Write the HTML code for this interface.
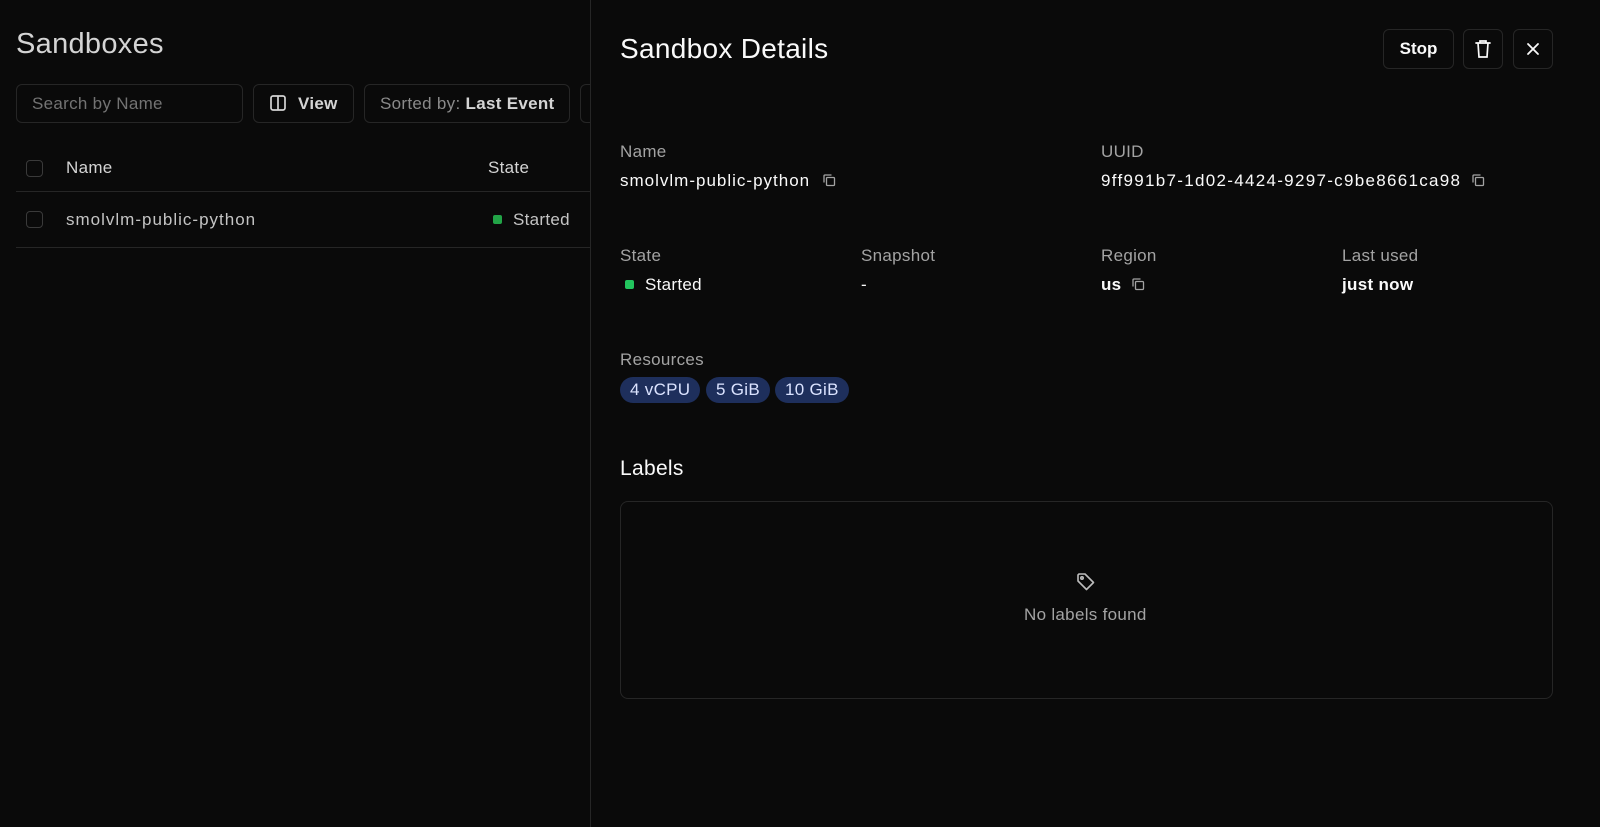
<!DOCTYPE html>
<html><head><style>
*{box-sizing:border-box;margin:0;padding:0}
body{width:1600px;height:827px;background:#0a0a0a;font-family:"Liberation Sans",sans-serif;color:#fafafa;overflow:hidden;position:relative}
.left{position:absolute;left:0;top:0;width:590px;height:827px;background:#0a0a0a}
.t{position:absolute;white-space:nowrap;letter-spacing:0.3px}
.btn{position:absolute;border:1px solid #262626;border-radius:6px;background:#0a0a0a;display:flex;align-items:center;justify-content:center}
.cb{position:absolute;width:17px;height:17px;border:1px solid #3a3a3a;border-radius:4px}
.panel{position:absolute;left:590px;top:0;width:1010px;height:827px;border-left:1px solid #262626;background:#0a0a0a}
.lbl{color:#a3a3a3;font-size:17px}
.val{color:#fafafa;font-size:17px}
.pill{position:absolute;top:377px;height:26px;background:#1e2f5c;border-radius:13px;color:#dbe3ff;font-size:17px;line-height:26px;padding:0 10px;letter-spacing:0.3px}
</style></head><body>
<div class="left">
<div class="t" style="left:16px;top:28px;font-size:29px;color:#d4d4d4">Sandboxes</div>
<div class="btn" style="left:16px;top:84px;width:227px;height:39px"></div>
<div class="t" style="left:32px;top:94px;font-size:17px;color:#737373">Search by Name</div>
<div class="btn" style="left:253px;top:84px;width:101px;height:39px"></div>
<svg class="t" style="left:269px;top:94px" width="18" height="18" viewBox="0 0 18 18" fill="none" stroke="#d4d4d4" stroke-width="1.7"><rect x="2" y="2" width="14" height="14" rx="2"/><line x1="9" y1="2" x2="9" y2="16"/></svg>
<div class="t" style="left:298px;top:94px;font-size:17px;color:#d4d4d4;font-weight:bold">View</div>
<div class="btn" style="left:364px;top:84px;width:206px;height:39px"></div>
<div class="t" style="left:380px;top:94px;font-size:17px;color:#8a8a8a">Sorted by: <span style="color:#d4d4d4;font-weight:bold">Last Event</span></div>
<div class="btn" style="left:580px;top:84px;width:30px;height:39px"></div>
<div class="cb" style="left:26px;top:160px"></div>
<div class="t" style="left:66px;top:158px;font-size:17px;color:#d4d4d4">Name</div>
<div class="t" style="left:488px;top:158px;font-size:17px;color:#d4d4d4">State</div>
<div style="position:absolute;left:16px;top:191px;width:574px;height:1px;background:#262626"></div>
<div class="cb" style="left:26px;top:211px"></div>
<div class="t" style="left:66px;top:210px;font-size:17px;color:#c4c4c4;letter-spacing:1px">smolvlm-public-python</div>
<div style="position:absolute;left:493px;top:215px;width:9px;height:9px;background:#22a447;border-radius:2px"></div>
<div class="t" style="left:513px;top:210px;font-size:17px;color:#c4c4c4">Started</div>
<div style="position:absolute;left:16px;top:247px;width:574px;height:1px;background:#262626"></div>
</div>
<div class="panel"></div>
<div class="t" style="left:620px;top:33px;font-size:28px;color:#fafafa">Sandbox Details</div>
<div class="btn" style="left:1383px;top:29px;width:71px;height:40px;font-size:17px;font-weight:bold">Stop</div>
<div class="btn" style="left:1463px;top:29px;width:40px;height:40px"><svg width="18" height="20" viewBox="0 0 18 20" fill="none" stroke="#fafafa" stroke-width="1.7" stroke-linecap="round"><path d="M2 4h14M6 4V2h6v2M4 4l1 14h8l1-14"/></svg></div>
<div class="btn" style="left:1513px;top:29px;width:40px;height:40px"><svg width="14" height="14" viewBox="0 0 14 14" stroke="#fafafa" stroke-width="1.8" stroke-linecap="round"><path d="M2 2l10 10M12 2L2 12"/></svg></div>

<div class="t lbl" style="left:620px;top:142px">Name</div>
<div class="t val" style="left:620px;top:171px;letter-spacing:1px">smolvlm-public-python</div>
<svg class="t" style="left:822px;top:173px" width="14" height="14" viewBox="0 0 14 14" fill="none" stroke="#a3a3a3" stroke-width="1.3"><rect x="4.5" y="4.5" width="8" height="8" rx="1"/><path d="M2 9.5V3a1 1 0 0 1 1-1h6.5"/></svg>
<div class="t lbl" style="left:1101px;top:142px">UUID</div>
<div class="t val" style="left:1101px;top:171px;letter-spacing:1.3px">9ff991b7-1d02-4424-9297-c9be8661ca98</div>
<svg class="t" style="left:1471px;top:173px" width="14" height="14" viewBox="0 0 14 14" fill="none" stroke="#a3a3a3" stroke-width="1.3"><rect x="4.5" y="4.5" width="8" height="8" rx="1"/><path d="M2 9.5V3a1 1 0 0 1 1-1h6.5"/></svg>

<div class="t lbl" style="left:620px;top:246px">State</div>
<div style="position:absolute;left:625px;top:280px;width:9px;height:9px;background:#22c55e;border-radius:2px"></div>
<div class="t val" style="left:645px;top:275px">Started</div>
<div class="t lbl" style="left:861px;top:246px">Snapshot</div>
<div class="t val" style="left:861px;top:275px">-</div>
<div class="t lbl" style="left:1101px;top:246px">Region</div>
<div class="t val" style="left:1101px;top:275px;font-weight:bold">us</div>
<svg class="t" style="left:1131px;top:277px" width="14" height="14" viewBox="0 0 14 14" fill="none" stroke="#a3a3a3" stroke-width="1.3"><rect x="4.5" y="4.5" width="8" height="8" rx="1"/><path d="M2 9.5V3a1 1 0 0 1 1-1h6.5"/></svg>
<div class="t lbl" style="left:1342px;top:246px">Last used</div>
<div class="t val" style="left:1342px;top:275px;font-weight:bold">just now</div>

<div class="t lbl" style="left:620px;top:350px">Resources</div>
<div class="pill" style="left:620px">4 vCPU</div>
<div class="pill" style="left:706px">5 GiB</div>
<div class="pill" style="left:775px">10 GiB</div>

<div class="t" style="left:620px;top:457px;font-size:21px">Labels</div>
<div style="position:absolute;left:620px;top:501px;width:933px;height:198px;border:1px solid #262626;border-radius:8px"></div>
<svg class="t" style="left:1076px;top:572px" width="20" height="20" viewBox="0 0 20 20" fill="none" stroke="#bdbdbd" stroke-width="1.6" stroke-linejoin="round"><path d="M2 3v6l8.5 8.5 7-7L9 2H3z"/><circle cx="6" cy="6" r="1.2"/></svg>
<div class="t" style="left:1024px;top:605px;font-size:17px;color:#a3a3a3">No labels found</div>
</body></html>
